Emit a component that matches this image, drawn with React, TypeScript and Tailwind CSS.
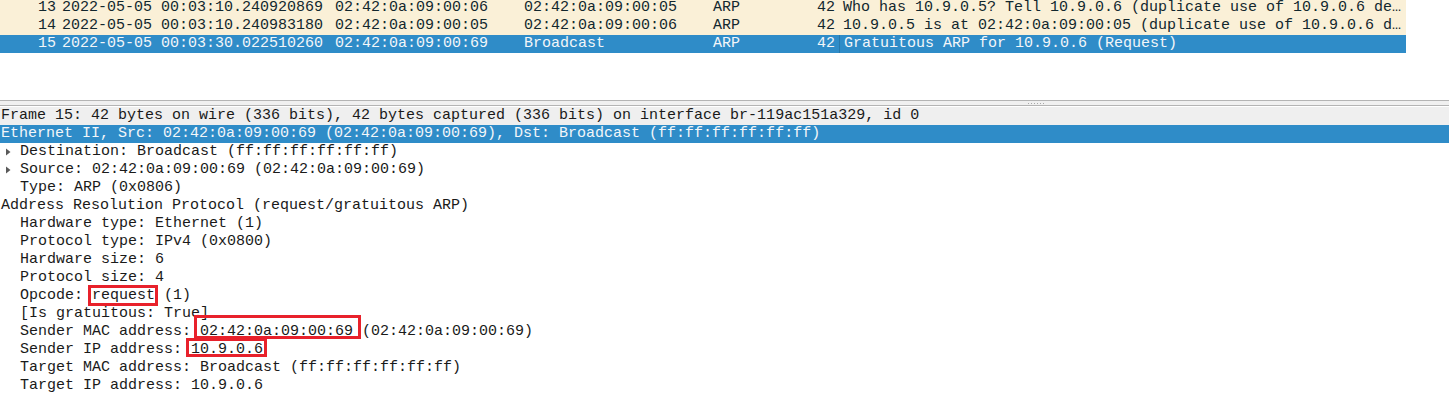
const mono = { fontFamily: '"Liberation Mono", "DejaVu Sans Mono", monospace' };

type Packet = {
  no: string;
  time: string;
  src: string;
  dst: string;
  proto: string;
  len: string;
  info: string;
  selected?: boolean;
};

const packets: Packet[] = [
  {
    no: "13",
    time: "2022-05-05 00:03:10.240920869",
    src: "02:42:0a:09:00:06",
    dst: "02:42:0a:09:00:05",
    proto: "ARP",
    len: "42",
    info: "Who has 10.9.0.5? Tell 10.9.0.6 (duplicate use of 10.9.0.6 detected!)",
  },
  {
    no: "14",
    time: "2022-05-05 00:03:10.240983180",
    src: "02:42:0a:09:00:05",
    dst: "02:42:0a:09:00:06",
    proto: "ARP",
    len: "42",
    info: "10.9.0.5 is at 02:42:0a:09:00:05 (duplicate use of 10.9.0.6 detected!)",
  },
  {
    no: "15",
    time: "2022-05-05 00:03:30.022510260",
    src: "02:42:0a:09:00:69",
    dst: "Broadcast",
    proto: "ARP",
    len: "42",
    info: "Gratuitous ARP for 10.9.0.6 (Request)",
    selected: true,
  },
];

function Arrow() {
  return (
    <svg width="20" height="18" viewBox="0 0 20 18" className="shrink-0">
      <path d="M6 5.5 L10.5 9 L6 12.5 Z" fill="#5a5a5a" />
    </svg>
  );
}

function Boxed({
  children,
  box,
}: {
  children: React.ReactNode;
  box: string;
}) {
  return (
    <span className="relative">
      {children}
      <span className={`absolute border-[3px] border-[#e8212b] ${box}`} />
    </span>
  );
}

function PacketRow({ p }: { p: Packet }) {
  const bg = p.selected ? "bg-[#2f8cc8] text-[#f3f6f9]" : "bg-[#faf0d7] text-[#12272e]";
  return (
    <div className={`flex h-[18px] leading-[18px] w-[1406px] whitespace-pre ${bg}`}>
      <div className="w-[58px] shrink-0 text-right pr-[2px]">{p.no}</div>
      <div className="w-[273px] shrink-0 pl-[4px]">{p.time}</div>
      <div className="w-[189px] shrink-0 pl-[4px]">{p.src}</div>
      <div className="w-[189px] shrink-0 pl-[4px]">{p.dst}</div>
      <div className="w-[71px] shrink-0 pl-[4px]">{p.proto}</div>
      <div className="w-[59px] shrink-0 text-right pr-[4px]">{p.len}</div>
      <div
        className={`w-[567px] shrink-0 pl-[4px] pr-[3px] overflow-hidden text-ellipsis ${
          p.selected ? "border-l border-[#2677ab]" : ""
        }`}
      >
        {p.info}
      </div>
    </div>
  );
}

function Line({
  children,
  indent,
  expander,
  className = "",
}: {
  children: React.ReactNode;
  indent?: boolean;
  expander?: boolean;
  className?: string;
}) {
  return (
    <div className={`flex h-[18px] leading-[18px] whitespace-pre ${className}`}>
      {indent ? expander ? <Arrow /> : <span className="w-[20px] shrink-0" /> : <span className="w-[1px] shrink-0" />}
      <span>{children}</span>
    </div>
  );
}

export default function App() {
  return (
    <div className="w-[1449px] h-[411px] bg-white text-[15px] overflow-hidden" style={mono}>
      {/* packet list */}
      <div className="h-[100px] mt-[-1px]">
        {packets.map((p) => (
          <PacketRow key={p.no} p={p} />
        ))}
      </div>

      {/* splitter */}
      <div className="h-[6px] border-y border-[#b4b4b4] bg-[#f0f0f0] flex items-center justify-start pl-[1028px] gap-[2px] mt-[1px]">
        {[0, 1, 2, 3, 4, 5].map((i) => (
          <span key={i} className="w-[1px] h-[1px] bg-[#a8a8a8]" />
        ))}
      </div>

      {/* packet details */}
      <div className="text-[#1a1a1a] pt-[1px]">
        <Line className="bg-[#efefef]">
          Frame 15: 42 bytes on wire (336 bits), 42 bytes captured (336 bits) on interface br-119ac151a329, id 0
        </Line>
        <Line className="bg-[#2f8cc8] text-[#f3f6f9]">
          Ethernet II, Src: 02:42:0a:09:00:69 (02:42:0a:09:00:69), Dst: Broadcast (ff:ff:ff:ff:ff:ff)
        </Line>
        <Line indent expander>Destination: Broadcast (ff:ff:ff:ff:ff:ff)</Line>
        <Line indent expander>Source: 02:42:0a:09:00:69 (02:42:0a:09:00:69)</Line>
        <Line indent>Type: ARP (0x0806)</Line>
        <Line>Address Resolution Protocol (request/gratuitous ARP)</Line>
        <Line indent>Hardware type: Ethernet (1)</Line>
        <Line indent>Protocol type: IPv4 (0x0800)</Line>
        <Line indent>Hardware size: 6</Line>
        <Line indent>Protocol size: 4</Line>
        <Line indent>
          Opcode: <Boxed box="-left-[4px] -right-[3px] -top-[2px] -bottom-[2px]">request</Boxed> (1)
        </Line>
        <Line indent>[Is gratuitous: True]</Line>
        <Line indent>
          Sender MAC address:{" "}
          <Boxed box="-left-[6px] -right-[8px] -top-[8px] bottom-[1px]">02:42:0a:09:00:69</Boxed> (02:42:0a:09:00:69)
        </Line>
        <Line indent>
          Sender IP address: <Boxed box="-left-[5px] -right-[4px] -top-[3px] bottom-[1px]">10.9.0.6</Boxed>
        </Line>
        <Line indent>Target MAC address: Broadcast (ff:ff:ff:ff:ff:ff)</Line>
        <Line indent>Target IP address: 10.9.0.6</Line>
      </div>
    </div>
  );
}
